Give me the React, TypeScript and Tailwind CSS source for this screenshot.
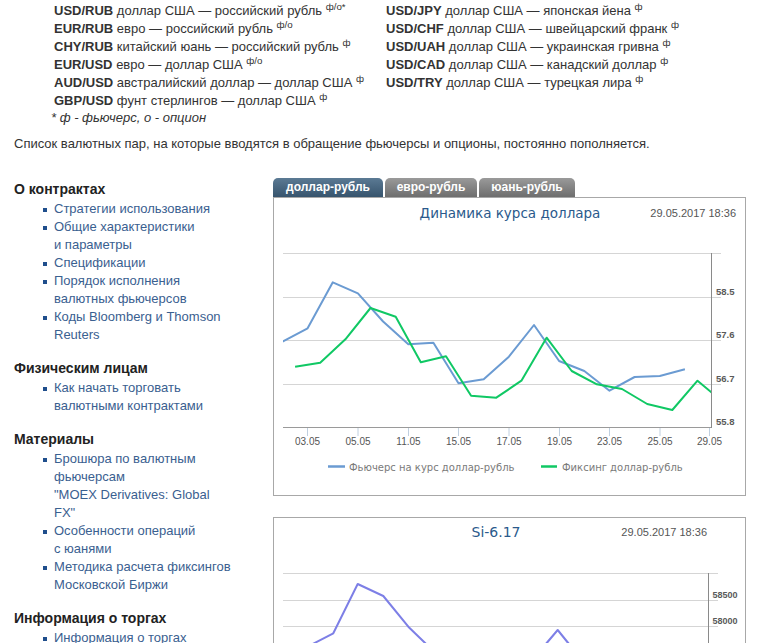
import React from "react";

const leftPairs: [string, string, string][] = [
  ["USD/RUB", "доллар США — российский рубль", "ф/о*"],
  ["EUR/RUB", "евро — российский рубль", "ф/о"],
  ["CHY/RUB", "китайский юань — российский рубль", "ф"],
  ["EUR/USD", "евро — доллар США", "ф/о"],
  ["AUD/USD", "австралийский доллар — доллар США", "ф"],
  ["GBP/USD", "фунт стерлингов — доллар США", "ф"],
];

const rightPairs: [string, string, string][] = [
  ["USD/JPY", "доллар США — японская йена", "ф"],
  ["USD/CHF", "доллар США — швейцарский франк", "ф"],
  ["USD/UAH", "доллар США — украинская гривна", "ф"],
  ["USD/CAD", "доллар США — канадский доллар", "ф"],
  ["USD/TRY", "доллар США — турецкая лира", "ф"],
];

const sections: { title: string; items: string[][] }[] = [
  {
    title: "О контрактах",
    items: [
      ["Стратегии использования"],
      ["Общие характеристики", "и параметры"],
      ["Спецификации"],
      ["Порядок исполнения", "валютных фьючерсов"],
      ["Коды Bloomberg и Thomson", "Reuters"],
    ],
  },
  {
    title: "Физическим лицам",
    items: [["Как начать торговать", "валютными контрактами"]],
  },
  {
    title: "Материалы",
    items: [
      ["Брошюра по валютным", "фьючерсам", "\"MOEX Derivatives: Global", "FX\""],
      ["Особенности операций", "с юанями"],
      ["Методика расчета фиксингов", "Московской Биржи"],
    ],
  },
  {
    title: "Информация о торгах",
    items: [["Информация о торгах"]],
  },
];

function Pair({ p }: { p: [string, string, string] }) {
  return (
    <div className="leading-[18px] whitespace-nowrap">
      <b className="font-bold">{p[0]}</b> {p[1]} <sup>{p[2]}</sup>
    </div>
  );
}

const X0 = 282.5;
const DX = 25.15;

const blueY = [341.7, 328.3, 282.3, 293.3, 321.5, 344.3, 342.7, 383.3, 379.3, 356.7, 325, 361, 371, 390.7, 377, 376, 369.3];
const greenY = [366.7, 362.7, 339.3, 308, 316.7, 362.3, 356.3, 395.7, 397.7, 380.7, 337.7, 371, 384.3, 389, 404, 410, 380.7, 401.6];

const bluePts = blueY.map((y, i) => `${(X0 + DX * i).toFixed(1)},${y}`).join(" ");
const greenPts = greenY.map((y, i) => `${(X0 + DX * (i + 0.5)).toFixed(1)},${y}`).join(" ");

const purplePts = [
  [282.5, 662],
  [307.6, 646.6],
  [333.3, 633.3],
  [357.7, 584],
  [383.3, 596],
  [408.3, 626.7],
  [433.4, 651],
  [458.5, 668],
  [483.7, 665],
  [508.8, 662],
  [534, 658],
  [557.7, 630],
  [584.3, 663],
  [609.4, 672],
  [634.6, 668],
  [659.7, 668],
  [684.9, 664],
]
  .map(([x, y]) => `${x},${y}`)
  .join(" ");

const xTicks: [number, string][] = [
  [307.5, "03.05"],
  [358, "05.05"],
  [408.5, "11.05"],
  [458.5, "15.05"],
  [509, "17.05"],
  [559.5, "19.05"],
  [609.5, "23.05"],
  [660, "25.05"],
  [709.5, "29.05"],
];

const yLabels1: [number, string][] = [
  [297.5, "58.5"],
  [340.5, "57.6"],
  [384.5, "56.7"],
  [427.5, "55.8"],
];

function Chart1() {
  return (
    <svg width={471} height={297} viewBox="274 198 471 297" className="block">
      <defs>
        <clipPath id="plot1">
          <rect x={283} y={240} width={428} height={188} />
        </clipPath>
      </defs>
      <text
        x={510}
        y={218}
        textAnchor="middle"
        fontFamily="'DejaVu Sans', Verdana, sans-serif"
        fontSize={13.5}
        fill="#2a5a8c"
      >
        Динамика курса доллара
      </text>
      <text
        x={736}
        y={217}
        textAnchor="end"
        fontFamily="'Liberation Sans', Arial, sans-serif"
        fontSize={11}
        fill="#555"
      >
        29.05.2017 18:36
      </text>
      {[253.5, 297.5, 340.5, 384.5].map((y) => (
        <line key={y} x1={283} x2={721} y1={y} y2={y} stroke="#d5d5d5" strokeWidth={1} />
      ))}
      <line x1={283} x2={712} y1={427.5} y2={427.5} stroke="#9a9a9a" strokeWidth={1} />
      <line x1={711.5} x2={711.5} y1={253} y2={428} stroke="#8a8a8a" strokeWidth={1} />
      {xTicks.map(([x, l]) => (
        <g key={l}>
          <line x1={x} x2={x} y1={428} y2={436} stroke="#c0d0e0" strokeWidth={1} />
          <text
            x={x}
            y={445}
            textAnchor="middle"
            fontFamily="'Liberation Sans', Arial, sans-serif"
            fontSize={10}
            fill="#555"
          >
            {l}
          </text>
        </g>
      ))}
      {yLabels1.map(([y, l]) => (
        <text
          key={l}
          x={716}
          y={y - 2.5}
          fontFamily="'Liberation Sans', Arial, sans-serif"
          fontSize={9.5}
          fontWeight={700}
          fill="#5a5a5a"
        >
          {l}
        </text>
      ))}
      <g clipPath="url(#plot1)">
        <polyline points={bluePts} fill="none" stroke="#6b9bd2" strokeWidth={2} strokeLinejoin="round" />
        <polyline points={greenPts} fill="none" stroke="#10c864" strokeWidth={2} strokeLinejoin="round" />
      </g>
      <line x1={328} x2={345} y1={466.5} y2={466.5} stroke="#6b9bd2" strokeWidth={2.5} />
      <text x={349} y={470.5} fontFamily="'DejaVu Sans', Verdana, sans-serif" fontSize={10} fill="#7a7a7a">
        Фьючерс на курс доллар-рубль
      </text>
      <line x1={541} x2={557} y1={466.5} y2={466.5} stroke="#10c864" strokeWidth={2.5} />
      <text x={562} y={470.5} fontFamily="'DejaVu Sans', Verdana, sans-serif" fontSize={10} fill="#7a7a7a">
        Фиксинг доллар-рубль
      </text>
    </svg>
  );
}

function Chart2() {
  return (
    <svg width={471} height={297} viewBox="274 518 471 297" className="block">
      <defs>
        <clipPath id="plot2">
          <rect x={283} y={560} width={426} height={240} />
        </clipPath>
      </defs>
      <text
        x={496}
        y={537}
        textAnchor="middle"
        fontFamily="'DejaVu Sans', Verdana, sans-serif"
        fontSize={14}
        fill="#2a5a8c"
      >
        Si-6.17
      </text>
      <text
        x={707}
        y={536}
        textAnchor="end"
        fontFamily="'Liberation Sans', Arial, sans-serif"
        fontSize={11}
        fill="#555"
      >
        29.05.2017 18:36
      </text>
      {[573.5, 600.5, 626.5, 652.5, 678.5, 704.5].map((y) => (
        <line key={y} x1={283} x2={718} y1={y} y2={y} stroke="#d5d5d5" strokeWidth={1} />
      ))}
      <line x1={708.5} x2={708.5} y1={573} y2={800} stroke="#8a8a8a" strokeWidth={1} />
      {[
        [600.5, "58500"],
        [626.5, "58000"],
      ].map(([y, l]) => (
        <text
          key={l as string}
          x={712.5}
          y={(y as number) - 3}
          fontFamily="'Liberation Sans', Arial, sans-serif"
          fontSize={9}
          fontWeight={700}
          fill="#5a5a5a"
        >
          {l}
        </text>
      ))}
      <g clipPath="url(#plot2)">
        <polyline points={purplePts} fill="none" stroke="#7d7fe6" strokeWidth={2} strokeLinejoin="round" />
      </g>
    </svg>
  );
}

export default function App() {
  return (
    <div className="font-['Liberation_Sans',Arial,sans-serif] text-[13px] text-[#333] bg-white pt-[2px] w-[757px]">
      <div className="flex pl-[54px]">
        <div className="w-[332px]">
          {leftPairs.map((p) => (
            <Pair key={p[0]} p={p} />
          ))}
          <div className="italic leading-[15px] ml-[-3px]">* ф - фьючерс, о - опцион</div>
        </div>
        <div>
          {rightPairs.map((p) => (
            <Pair key={p[0]} p={p} />
          ))}
        </div>
      </div>
      <p className="mt-[10px] pl-[14px] leading-[18px]">
        Список валютных пар, на которые вводятся в обращение фьючерсы и опционы, постоянно пополняется.
      </p>
      <div className="flex mt-[25px]">
        <div className="w-[273px] pl-[14px] pt-[1px] shrink-0">
          {sections.map((s, si) => (
            <div key={s.title} className={si > 0 ? "mt-[14px]" : ""}>
              <div className="font-bold text-[14px] leading-[20px] text-[#222]">{s.title}</div>
              <ul className="pl-[40px] mt-[1px]">
                {s.items.map((it, ii) => (
                  <li key={ii} className="flex leading-[18px]">
                    <span className="w-[4px] h-[4px] bg-[#1f4e8c] shrink-0 mt-[8px] ml-[-11px] mr-[7px]" />
                    <span className="text-[#3a6090]">
                      {it.map((line, li) => (
                        <React.Fragment key={li}>
                          {li > 0 && <br />}
                          {line}
                        </React.Fragment>
                      ))}
                    </span>
                  </li>
                ))}
              </ul>
            </div>
          ))}
        </div>
        <div className="w-[473px] shrink-0">
          <div className="flex gap-[2px] h-[19px]">
            <div className="w-[110px] rounded-t-[5px] bg-linear-to-b from-[#5b7a94] to-[#37546d] text-white font-bold text-[12px] leading-[19px] text-center">
              доллар-рубль
            </div>
            <div className="w-[92px] rounded-t-[5px] bg-linear-to-b from-[#9a9a9a] to-[#6e6e6e] text-white font-bold text-[12px] leading-[19px] text-center">
              евро-рубль
            </div>
            <div className="w-[96px] rounded-t-[5px] bg-linear-to-b from-[#9a9a9a] to-[#6e6e6e] text-white font-bold text-[12px] leading-[19px] text-center">
              юань-рубль
            </div>
          </div>
          <div className="border border-[#a8a8a8] h-[299px] bg-white">
            <Chart1 />
          </div>
          <div className="mt-[21px] border border-[#a8a8a8] h-[299px] bg-white">
            <Chart2 />
          </div>
        </div>
      </div>
    </div>
  );
}
